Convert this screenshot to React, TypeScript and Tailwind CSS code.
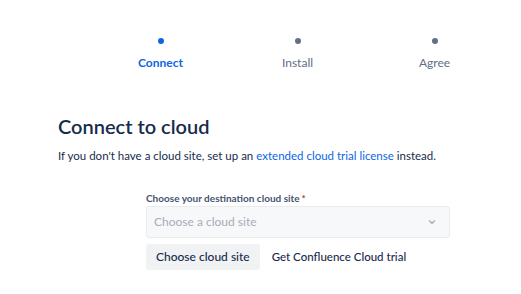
export default function App() {
  return (
    <div
      className="h-[294px] w-[521px] bg-white text-[#172B4D]"
      style={{ fontFamily: 'Lato, "Noto Sans", sans-serif' }}
    >
      <div className="flex pl-[92px] pt-[38px]">
        {[
          { label: "Connect", active: true },
          { label: "Install", active: false },
          { label: "Agree", active: false },
        ].map((s) => (
          <div key={s.label} className="flex w-[137px] flex-col items-center">
            <div
              className={
                s.active
                  ? "h-[6px] w-[6px] rounded-full bg-[#0C66E4]"
                  : "h-[6px] w-[6px] rounded-full bg-[#626F86]"
              }
            />
            <span
              className={
                s.active
                  ? "mt-[10px] text-[12px] font-bold text-[#0C66E4]"
                  : "mt-[10px] text-[12px] text-[#626F86]"
              }
            >
              {s.label}
            </span>
          </div>
        ))}
      </div>

      <div className="pl-[58px] pt-[42px]">
        <h1 className="text-[20px] font-semibold leading-[24px]">Connect to cloud</h1>
        <p className="mt-[10px] text-[11.5px] leading-[16px]">
          If you don't have a cloud site, set up an{" "}
          <span className="text-[#0C66E4]">extended cloud trial license</span> instead.
        </p>
      </div>

      <div className="ml-[146px] mt-[27px] w-[304px]">
        <div className="text-[10px] font-bold leading-[14px] text-[#44546F]">
          Choose your destination cloud site
          <span className="ml-[2px] text-[#C9372C]">*</span>
        </div>
        <div className="mt-[1px] flex h-[32px] items-center justify-between rounded-[3px] border border-[#E9EBEE] bg-[#F7F8F9] pl-[7px] pr-[12px]">
          <span className="text-[12px] text-[#A5ADBA]">Choose a cloud site</span>
          <svg width="10" height="10" viewBox="0 0 10 10">
            <path d="M2.5 4 L5 6.3 L7.5 4" fill="none" stroke="#A5ADBA" strokeWidth="1.4" strokeLinecap="round" />
          </svg>
        </div>
        <div className="mt-[6px] flex items-center gap-[2px]">
          <button className="h-[26px] rounded-[3px] bg-[#F1F2F4] px-[10px] text-[12px] font-medium">
            Choose cloud site
          </button>
          <button className="h-[26px] px-[10px] text-[11.5px] font-medium">
            Get Confluence Cloud trial
          </button>
        </div>
      </div>
    </div>
  );
}
